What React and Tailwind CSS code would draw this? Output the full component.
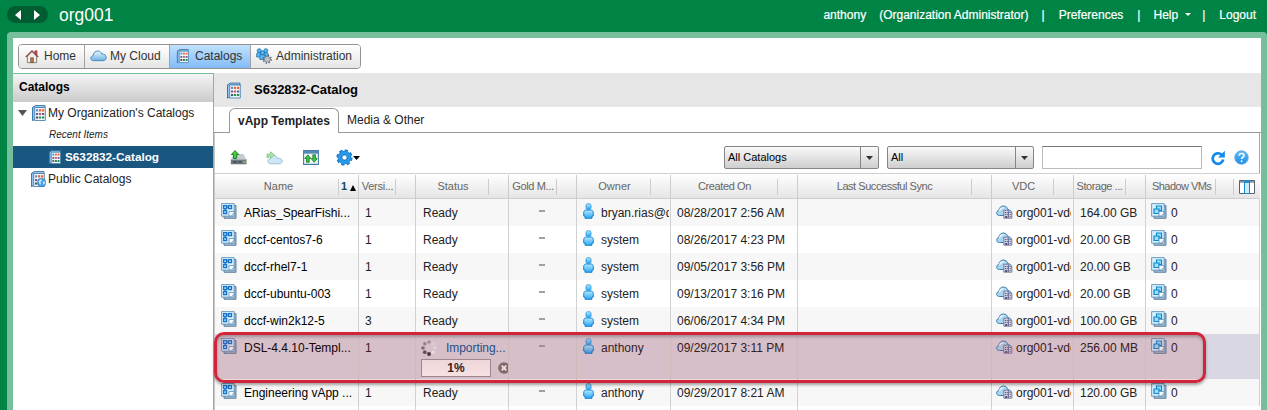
import React from "react";

const COLS =
  "grid grid-cols-[144px_57px_93px_68px_94px_127px_194px_82px_72px_114px]";

const rows = [
  { name: "ARias_SpearFishi...", version: "1", owner: "bryan.rias@d", created: "08/28/2017 2:56 AM", storage: "164.00 GB" },
  { name: "dccf-centos7-6", version: "1", owner: "system", created: "08/26/2017 4:23 PM", storage: "20.00 GB" },
  { name: "dccf-rhel7-1", version: "1", owner: "system", created: "09/05/2017 3:56 PM", storage: "20.00 GB" },
  { name: "dccf-ubuntu-003", version: "1", owner: "system", created: "09/13/2017 3:16 PM", storage: "20.00 GB" },
  { name: "dccf-win2k12-5", version: "3", owner: "system", created: "06/06/2017 4:34 PM", storage: "100.00 GB" },
  { name: "DSL-4.4.10-Templ...", version: "1", owner: "anthony", created: "09/29/2017 3:11 PM", storage: "256.00 MB", importing: true },
  { name: "Engineering vApp ...", version: "1", owner: "anthony", created: "09/29/2017 8:21 AM", storage: "120.00 GB" },
];

function CatalogIcon({ className = "h-4 w-4", globe = false }) {
  return (
    <svg viewBox="0 0 16 16" className={`shrink-0 ${className}`}>
      <path d="M1.5 2.5 4.5.8V14l-3 1.7z" fill="#8fc3ec" stroke="#2d6da6" strokeWidth=".9" />
      <path d="M1.5 2.5 4.5.6H14v1.8H4" fill="#b9dcf5" stroke="#2d6da6" strokeWidth=".9" />
      <path d="M3.7 2.5h10.6v13H3.7z" fill="#f2f5f8" stroke="#4c83b3" strokeWidth=".9" />
      <path d="M5 4.3h2.2v2.1H5z" fill="#4a8fd8" />
      <path d="M8 4.3h2.2v2.1H8zM11 4.3h2.2v2.1H11z" fill="#f0622f" />
      <path d="M5 7.9h2.2V10H5zM11 7.9h2.2V10H11z" fill="#5a5da8" />
      <path d="M8 7.9h2.2V10H8z" fill="#d25a4b" />
      <path d="M5 11.5h2.2v2.1H5z" fill="#4d5560" />
      <path d="M8 11.5h2.2v2.1H8zM11 11.5h2.2v2.1H11z" fill="#258a58" />
      {globe && (
        <>
          <circle cx="11.6" cy="11.6" r="4.1" fill="#4ba0e6" stroke="#2572b8" strokeWidth=".6" />
          <path d="M8.5 10.5c1-2 3-2.3 3.5-1.8l-.6 1.5-1.3.8.9 1.3-.8 1.8zM13 11l2-.8v2l-1.8 1.5z" fill="#d3edfc" />
        </>
      )}
    </svg>
  );
}

function HomeIcon() {
  return (
    <svg viewBox="0 0 16 16" className="h-[15px] w-[14px] shrink-0">
      <path d="M11.3 1.5h2.4v5h-2.4z" fill="#c95959" stroke="#84393c" strokeWidth=".8" />
      <path d="M2.7 7.5 8 2.3l5.3 5.2V15H2.7z" fill="#f2eee8" stroke="#7c706c" />
      <path d="M.9 8.6 8 1.5l7.1 7.1" fill="none" stroke="#954747" strokeWidth="1.5" />
      <path d="M6.4 9.5h3.2V15H6.4z" fill="#b5764c" stroke="#6b4a36" strokeWidth=".7" />
    </svg>
  );
}

function CloudIcon() {
  return (
    <svg viewBox="0 0 17 12" className="h-[12px] w-[17px] shrink-0">
      <defs>
        <linearGradient id="cloudFill" x2="0" y2="1">
          <stop stopColor="#eaf6fd" />
          <stop offset="1" stopColor="#68b3e3" />
        </linearGradient>
      </defs>
      <path d="M3.7 10.7C1.8 10.7.7 9.7.7 8.3c0-1.3 1-2.2 2.3-2.4C3.4 2.8 5.1 1 7.8 1c2 0 3.4 1.1 4 3 2.5-.2 4.4 1.3 4.4 3.5 0 2-1.4 3.2-3.3 3.2z" fill="url(#cloudFill)" stroke="#4385b8" strokeWidth=".9" />
    </svg>
  );
}

function AdminIcon() {
  return (
    <svg viewBox="0 0 16 16" className="h-4 w-4 shrink-0">
      <g fill="#58b8f2" stroke="#1765a8" strokeWidth=".7">
        <path d="M.6 9V6.3C.6 5 1.5 4.6 2.5 4.6h2V9zM8 9V4.6h2.2c1 0 2 .5 2 1.8V9z" />
        <circle cx="3.2" cy="2.7" r="2" />
        <circle cx="9.8" cy="2.7" r="2" />
        <path d="M3.8 11.5V8.2c0-1 .8-1.6 1.8-1.6h1.8c1 0 1.8.6 1.8 1.6v3.3z" />
        <circle cx="6.5" cy="4.8" r="2" />
      </g>
      <circle cx="11.2" cy="11.2" r="3.8" fill="none" stroke="#626a70" strokeWidth="1.7" strokeDasharray="1.5 1.48" />
      <circle cx="11.2" cy="11.2" r="2.8" fill="#dfe3e5" stroke="#70787e" strokeWidth=".8" />
      <circle cx="11.2" cy="11.2" r="1.2" fill="#fff" stroke="#61686e" strokeWidth=".6" />
    </svg>
  );
}

function TemplateIcon({ shadow = false }) {
  return (
    <svg viewBox="0 0 16 16" className="h-4 w-4 shrink-0">
      <path d="M3 2.5h12v12.8H3z" fill="#9fb8cd" stroke="#58799b" strokeWidth=".9" />
      <path d="M.6.6h12.6v12.6H.6z" fill="#d8effc" stroke="#6293bb" strokeWidth=".9" />
      {shadow ? (
        <g fill="#9fddfa" stroke="#0a8bd0" strokeWidth="1.2">
          <path d="M5.5 3h5v4.5h-5z" />
          <path d="M3 6h5v4.5H3z" />
        </g>
      ) : (
        <g fill="#a9dbfa" stroke="#1674c8" strokeWidth="1.3">
          <path d="M2.6 2.6h3v3h-3zM7.5 2.6h3v3h-3zM2.6 7.6h3v3h-3z" />
          <path d="M5.6 4.1h1.9M4.1 5.6v2" />
        </g>
      )}
      <path d="M8 13V8.5h5V10l-2.6 3z" fill="#f9fdff" stroke="#6590b5" strokeWidth=".8" />
    </svg>
  );
}

function UserIcon() {
  return (
    <svg viewBox="0 0 11 16" className="h-4 w-[11px] shrink-0">
      <defs>
        <linearGradient id="userFill" x2="0" y2="1">
          <stop stopColor="#b4eaff" />
          <stop offset="1" stopColor="#2aa6f5" />
        </linearGradient>
      </defs>
      <path d="M.7 13V9.6C.7 7.8 2 7 3.2 7h4.6c1.2 0 2.5.8 2.5 2.6V13H9v2.3H2V13z" fill="url(#userFill)" stroke="#087bd0" strokeWidth=".9" />
      <path d="M3 2.3C3 .1 8 .1 8 2.3v2.6C8 7 3 7 3 4.9z" fill="url(#userFill)" stroke="#2191d8" strokeWidth=".8" />
    </svg>
  );
}

function VdcIcon() {
  return (
    <svg viewBox="0 0 17 14" className="h-[14px] w-[17px] shrink-0">
      <path d="M3.5 10.5C-.2 10.5-.2 6 2.8 5.6 3.2 2.7 4.8 1 7.5 1c2.5 0 4 1.7 4.3 3.7 2.4 0 3.5 1.2 3.5 3v2.8z" fill="#a9d5ef" stroke="#3f7da9" strokeWidth="1" />
      <path d="M3.5 6C4 3.5 6 2.4 8 3" fill="none" stroke="#edf8fe" strokeWidth="1.3" />
      <path d="M7.8 5.2h4.6v8H7.8zM12.4 7.3h3.5v5.9h-3.5z" fill="#d0d3e6" stroke="#666a91" strokeWidth=".8" />
      <path d="M9 7h.9v1H9zM10.7 7h.9v1h-.9zM9 9h.9v1H9zM10.7 9h.9v1h-.9zM9.2 11h2v2h-2zM13.8 9h.9v1h-.9zM13.8 11h.9v1h-.9z" fill="#4a4e75" />
    </svg>
  );
}

function UploadIcon() {
  return (
    <svg viewBox="0 0 17 15" className="h-[15px] w-[17px] shrink-0">
      <path d="M3.5 4h10l3 6H.8z" fill="#c6cbd0" />
      <path d="M.8 9.5h15.7v4.8H.8z" fill="#707983" />
      <path d="M1 9.5h15.5" stroke="#a7aeb4" />
      <path d="M13.5 11.2h1.8v1.5h-1.8z" fill="#80e34d" />
      <path d="M3 11h4v2H3zM8.5 11h3v2h-3z" fill="#4e565e" />
      <path d="M5 .6 8.8 4.5H6.6v4H3.5v-4H1.3z" fill="#4ccb38" stroke="#127c20" strokeWidth=".9" />
    </svg>
  );
}

function AddCloudIcon() {
  return (
    <svg viewBox="0 0 17 14" className="h-[14px] w-[17px] shrink-0">
      <path d="M5 12.8c-4 0-3.8-4.7-.7-4.8.4-2.5 1.8-3.5 3.7-3.5 2 0 3 1.2 3.4 2.7 3-.2 4.8 1 4.8 2.9 0 1.8-1.4 2.7-3 2.7z" fill="#cee7f5" stroke="#93bad3" strokeWidth=".9" />
      <path d="M1 3.1h3.5V.8L8.5 4l-4 3.3V5.2H2.8v1.5H1z" fill="#b3e8a9" stroke="#82bd86" strokeWidth=".8" />
    </svg>
  );
}

function TransferIcon() {
  return (
    <svg viewBox="0 0 16 15" className="h-[15px] w-4 shrink-0">
      <path d="M.6.6h14.8v13.8H.6z" fill="#f4f7f8" stroke="#477ca8" strokeWidth="1.1" />
      <path d="M1 1h14v2.7H1z" fill="#568bb8" />
      <path d="m4.8 4.8 3 3.7H6.2v3.7H3.4V8.5H1.7zM11.2 12.3l3-3.7h-1.6V4.8H9.8v3.8H8.2z" fill="#40c53a" stroke="#12782a" strokeWidth=".8" />
    </svg>
  );
}

function GearIcon() {
  return (
    <svg viewBox="0 0 17 17" className="h-[17px] w-[17px] shrink-0">
      <circle cx="8.5" cy="8.5" r="6.7" fill="none" stroke="#1468bd" strokeWidth="2.8" strokeDasharray="3.1 2.162" />
      <circle cx="8.5" cy="8.5" r="4.6" fill="none" stroke="#1672c8" strokeWidth="4.4" />
      <circle cx="8.5" cy="8.5" r="4.6" fill="none" stroke="#249bec" strokeWidth="3.4" />
      <circle cx="8.5" cy="8.5" r="6.5" fill="none" stroke="#2794e5" strokeWidth="1.8" strokeDasharray="2.1 3.005" strokeDashoffset="-.5" />
      <circle cx="8.5" cy="8.5" r="2.5" fill="#fff" stroke="#1468b6" strokeWidth=".7" />
    </svg>
  );
}

function Caret({ className = "h-1 w-2" }) {
  return (
    <svg viewBox="0 0 8 4" preserveAspectRatio="none" className={`shrink-0 ${className}`}>
      <path d="M0 0h8L4 4z" fill="currentColor" />
    </svg>
  );
}

function Spinner() {
  return (
    <svg viewBox="0 0 16 16" className="h-4 w-4 shrink-0">
      <g fill="#38373e">
        <circle cx="8" cy="2" r="1.8" opacity=".35" />
        <circle cx="3.8" cy="3.8" r="1.8" opacity=".45" />
        <circle cx="2" cy="8" r="1.8" opacity=".6" />
        <circle cx="3.8" cy="12.2" r="1.9" opacity=".8" />
        <circle cx="8" cy="14" r="1.9" />
      </g>
      <g fill="#fff">
        <circle cx="12.2" cy="12.2" r="1.8" opacity=".75" />
        <circle cx="14" cy="8" r="1.8" opacity=".5" />
        <circle cx="12.2" cy="3.8" r="1.8" opacity=".3" />
      </g>
    </svg>
  );
}

function NavButton({ icon, label, active, className }) {
  return (
    <div
      className={`flex items-center border-r border-[#a2a2a2] pb-px last:border-r-0 ${
        active ? "bg-linear-to-b from-[#c0e1fc] to-[#83bcf8]" : "bg-linear-to-b from-white to-[#e5e5e5]"
      } ${className}`}
    >
      {icon}
      <span>{label}</span>
    </div>
  );
}

function Select({ label, className }) {
  return (
    <div className={`flex h-[23px] rounded-[2px] border border-[#858585] bg-linear-to-b from-[#fafafa] to-[#cecece] text-[11px] text-black ${className}`}>
      <span className="flex-1 pl-[3px] leading-[20px]">{label}</span>
      <span className="flex w-[18px] items-center justify-center border-l border-[#858585] text-[#333]">
        <Caret className="h-1 w-[7px]" />
      </span>
    </div>
  );
}

function HeaderCell({ label, sort, className = "" }) {
  return (
    <div className="flex min-w-0 items-center border-r border-[#ccc]">
      <span className={`flex-1 text-center whitespace-nowrap ${className}`}>{label}</span>
      <span className="flex h-4 w-[20px] shrink-0 items-center justify-end gap-[3px] border-l border-[#ccc] pr-[2px] font-bold text-[#164b59]">
        {sort && (
          <>
            <span>1</span>
            <svg viewBox="0 0 6 6" className="mt-0.5 h-[6px] w-[6px] text-black">
              <path d="M3 0 6 6H0z" fill="currentColor" />
            </svg>
          </>
        )}
      </span>
    </div>
  );
}

function Cell({ children, className = "" }) {
  return (
    <div className={`min-w-0 border-r border-[#d1d1d1] ${className}`}>
      <div className="flex h-[27px] items-center overflow-hidden pt-px whitespace-nowrap">{children}</div>
    </div>
  );
}

function Row({ row, index }) {
  const tone = row.importing ? "bg-[#d9d8e2]" : index % 2 === 0 ? "bg-[#f7f7f7]" : "bg-white";
  return (
    <div className={`${COLS} ${row.importing ? "h-[45px]" : "h-[27px]"} ${tone}`}>
      <Cell className="pl-[6px] text-black">
        <span className="-mt-1 mr-[7px]"><TemplateIcon /></span>
        {row.name}
      </Cell>
      <Cell className="pl-[6px]">{row.version}</Cell>
      {row.importing ? (
        <div className="overflow-hidden border-r border-[#d1d1d1] pl-[5px]">
          <div className="flex h-[25px] items-center pt-[3px] whitespace-nowrap text-[#075a96]">
            <Spinner />
            <span className="ml-[9px] tracking-[-0.05px]">Importing...</span>
          </div>
          <div className="flex w-[87px] items-center gap-[7px] overflow-hidden">
            <div className="flex h-[18px] w-[70px] shrink-0 items-center justify-center border border-[#9a9799] bg-linear-to-b from-[#f4f4f4] to-white font-bold">1%</div>
            <svg viewBox="0 0 12 12" className="h-3 w-3 shrink-0">
              <circle cx="6" cy="6" r="5.8" fill="#777" />
              <path d="m3.7 3.7 4.6 4.6m0-4.6L3.7 8.3" stroke="#fff" strokeWidth="1.8" />
            </svg>
          </div>
        </div>
      ) : (
        <Cell className="pl-[7px]">Ready</Cell>
      )}
      <Cell><span className="ml-[30px] h-[2px] w-[6px] -translate-y-[2px] bg-[#a0a0a0]" /></Cell>
      <Cell className="pr-px pl-[6px]">
        <span className="-mt-1 mr-[7px]"><UserIcon /></span>
        {row.owner}
      </Cell>
      <Cell className="pl-[6px]">{row.created}</Cell>
      <Cell />
      <Cell className="pr-[2px] pl-[4px]">
        <span className="-mt-0.5 mr-[3px]"><VdcIcon /></span>
        org001-vdc
      </Cell>
      <Cell className="pl-[6px]">{row.storage}</Cell>
      <Cell className="pl-[5px]">
        <span className="-mt-1 mr-[4px]"><TemplateIcon shadow /></span>
        0
      </Cell>
    </div>
  );
}

export default function App() {
  return (
    <div className="flex h-[410px] w-[1267px] flex-col overflow-hidden bg-[#008446] font-['Liberation_Sans',Arial,sans-serif] text-[12px] text-[#222]">
      <header className="flex h-8 shrink-0 items-center pb-[3px] pl-[7px] text-white">
        <div className="flex h-[17px] w-[41px] items-center justify-center gap-[13px] rounded-full bg-[#005c31]">
          <svg viewBox="0 0 6 10" className="h-2.5 w-1.5"><path d="M6 0v10L0 5z" fill="white" /></svg>
          <svg viewBox="0 0 6 10" className="h-2.5 w-1.5"><path d="M0 0v10l6-5z" fill="white" /></svg>
        </div>
        <h1 className="ml-[11px] text-[17.5px] leading-7">org001</h1>
        <div className="ml-auto flex items-center pr-[11px] [-webkit-text-stroke:0.2px_white]">
          <span>anthony</span>
          <span className="ml-[13px]">(Organization Administrator)</span>
          <span className="ml-[13px]">|</span>
          <span className="ml-[14px]">Preferences</span>
          <span className="ml-[14px]">|</span>
          <span className="ml-[13px]">Help</span>
          <Caret className="ml-[7px] h-[3px] w-[6px]" />
          <span className="ml-[11px]">|</span>
          <span className="ml-[14px]">Logout</span>
        </div>
      </header>

      <div className="ml-[7px] flex min-h-0 flex-1 flex-col rounded-t-[4px] bg-[#76be9c] pt-[6px] pr-[6px] pl-[6px]">
        <nav className="flex h-[35px] shrink-0 bg-white pt-[6px] pl-[5px]">
          <div className="flex h-[25px] w-[343px] overflow-hidden rounded-[4px] border border-[#929292] text-[#333]">
            <NavButton icon={<HomeIcon />} label="Home" className="w-[66px] gap-[5px] pl-[6px]" />
            <NavButton icon={<CloudIcon />} label="My Cloud" className="w-[85px] gap-[3px] pl-[5px]" />
            <NavButton active icon={<CatalogIcon className="h-4 w-3.5" />} label="Catalogs" className="w-[81px] gap-[5px] pl-[6px]" />
            <NavButton icon={<AdminIcon />} label="Administration" className="flex-1 gap-[4px] pl-[5px]" />
          </div>
        </nav>

        <div className="flex min-h-0 flex-1 bg-white">
          <aside className="w-[201px] shrink-0 border-t border-r border-[#76be9c] bg-white">
            <h2 className="h-[28px] bg-linear-to-b from-[#f4f4f4] to-[#cbcbcb] pl-[6px] leading-[26px] font-bold text-black">Catalogs</h2>
            <div className="flex h-[22px] items-center pl-[5px]">
              <Caret className="h-[6px] w-[9px] text-[#555]" />
              <CatalogIcon className="ml-[4px] h-4 w-4" />
              <span className="ml-px">My Organization's Catalogs</span>
            </div>
            <div className="h-[22px] pl-[36px] text-[10px] leading-[21px] italic">Recent Items</div>
            <div className="flex h-[22px] items-center gap-[3px] bg-[#1a5780] pl-[35px] text-[11.75px] font-bold text-white">
              <CatalogIcon className="h-3.5 w-3.5" />
              <span>S632832-Catalog</span>
            </div>
            <div className="flex h-[22px] items-center pl-[17px]">
              <CatalogIcon className="h-4 w-4" globe />
              <span className="ml-[2px]">Public Catalogs</span>
            </div>
          </aside>

          <main className="flex w-[1047px] shrink-0 flex-col">
            <div className="flex h-[34px] shrink-0 items-center bg-[#e6e6e6] pl-[12px] text-[13px] font-bold text-black">
              <CatalogIcon className="h-[19px] w-4" />
              <span className="ml-[12px]">S632832-Catalog</span>
            </div>
            <div className="flex h-[26px] shrink-0 items-end">
              <span className="w-[15px] self-stretch border-b border-[#999]" />
              <div className="h-[25px] w-[110px] rounded-t-[6px] border border-b-0 border-[#999] pl-[8px] leading-[24px] font-bold text-[#222]">vApp Templates</div>
              <div className="h-[25px] flex-1 border-b border-[#999] pl-[8px] leading-[24px]">Media &amp; Other</div>
            </div>

            <div className="mr-px flex h-[277px] shrink-0 flex-col border-r border-l border-r-[#a8a8a8] border-l-[#c8c8c8]">
              <div className="flex h-[40px] shrink-0 items-center pt-[9px] pl-[15px]">
                <UploadIcon />
                <span className="ml-[19px]"><AddCloudIcon /></span>
                <span className="ml-[20px]"><TransferIcon /></span>
                <span className="ml-[17px]"><GearIcon /></span>
                <Caret className="h-1 w-[7px] text-black" />
                <Select label="All Catalogs" className="ml-[364px] w-[155px]" />
                <Select label="All" className="ml-[8px] w-[147px]" />
                <div className="ml-[8px] h-[23px] w-[160px] border border-[#bbb] border-t-[#777] bg-white" />
                <svg viewBox="0 0 16 16" className="ml-[8px] h-4 w-4">
                  <path d="M13.2 9.5A5.3 5.3 0 1 1 11.5 4.6" fill="none" stroke="#1287ec" strokeWidth="2.7" />
                  <path d="M14.8.8v6.7H8z" fill="#1287ec" />
                </svg>
                <svg viewBox="0 0 16 16" className="ml-[8px] h-[15px] w-[15px]">
                  <defs>
                    <linearGradient id="helpFill" x2="0" y2="1">
                      <stop stopColor="#67bdf6" />
                      <stop offset="1" stopColor="#168de8" />
                    </linearGradient>
                  </defs>
                  <circle cx="8" cy="8" r="7.2" fill="url(#helpFill)" stroke="#63a9df" />
                  <path d="M5.5 6C5.6 2.8 10.6 3 10.6 6 10.6 7.8 8.1 7.7 8.1 9.7" fill="none" stroke="white" strokeWidth="1.7" />
                  <circle cx="8.1" cy="12" r="1" fill="white" />
                </svg>
              </div>

              <div className="relative w-[1045px]">
                <div className={`${COLS} h-[26px] border-t border-b border-[#cfcfcf] bg-linear-to-b from-white to-[#e5e5e5] pt-px text-[11px] text-[#666]`}>
                  <HeaderCell label="Name" sort className="pl-[4px]" />
                  <HeaderCell label="Versi..." className="tracking-[-0.25px] pl-px" />
                  <HeaderCell label="Status" className="pl-[2px]" />
                  <HeaderCell label="Gold M..." className="tracking-[-0.35px] pl-px" />
                  <HeaderCell label="Owner" className="pl-[2px]" />
                  <HeaderCell label="Created On" className="tracking-[-0.4px] pl-px" />
                  <HeaderCell label="Last Successful Sync" className="tracking-[-0.45px]" />
                  <HeaderCell label="VDC" className="pl-[2px]" />
                  <HeaderCell label="Storage ..." className="tracking-[-0.45px]" />
                  <div className="flex items-center">
                    <span className="flex h-4 w-[70px] items-center border-r border-[#ccc] pl-[6px] tracking-[-0.55px] whitespace-nowrap">Shadow VMs</span>
                    <span className="h-4 w-[18px] border-r border-[#ccc]" />
                    <svg viewBox="0 0 16 14" className="ml-[5px] h-[14px] w-4">
                      <path d="M.5.5h15v13H.5z" fill="#fff" stroke="#56616b" />
                      <path d="M1 1h14v1.8H1z" fill="#8b98a2" />
                      <path d="M5.5.5h5v13h-5z" fill="#c7ebff" stroke="#1e88c8" />
                      <path d="M6 .7h4V3H6z" fill="#258dca" />
                    </svg>
                  </div>
                </div>
                {rows.map((row, index) => (
                  <Row key={row.name} row={row} index={index} />
                ))}
                <div className={`${COLS} h-1 bg-white`}>
                  {rows.map((row) => <span key={row.name} className="border-r border-[#d1d1d1]" />)}
                  <span className="border-r border-[#d1d1d1]" />
                  <span className="border-r border-[#d1d1d1]" />
                </div>
                <div className="pointer-events-none absolute top-[159px] -left-px h-[51px] w-[992px] rounded-[10px] border-[3px] border-[#d2243a] bg-[#c0142a]/13 shadow-[0_2px_3px_rgba(0,0,0,0.35),inset_0_2px_3px_rgba(0,0,0,0.25)]" />
              </div>
            </div>
          </main>
        </div>
      </div>
    </div>
  );
}
